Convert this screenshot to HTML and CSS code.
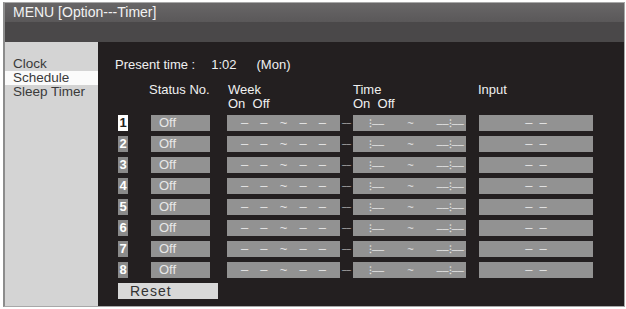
FILE: index.html
```html
<!DOCTYPE html>
<html>
<head>
<meta charset="utf-8">
<link rel="stylesheet" href="styles.css">
</head>
<body>
<div class="frame">
  <div class="titlebar">MENU [Option---Timer]</div>
  <div class="subbar"></div>
  <div class="main">
    <div class="sidebar">
      <div class="item">Clock</div>
      <div class="item active">Schedule</div>
      <div class="item">Sleep Timer</div>
    </div>
    <div class="content">
      <div class="present"><span>Present time :</span><span class="clock">1:02</span><span class="day">(Mon)</span></div>
      <div class="header">
        <div class="h-status">Status No.</div>
        <div class="h-week"><div>Week</div><div>On&nbsp; Off</div></div>
        <div class="h-time"><div>Time</div><div>On&nbsp; Off</div></div>
        <div class="h-input">Input</div>
      </div>
      <div class="rows">
        <div class="row"><div class="num sel">1</div><div class="status">Off</div><div class="week"><span>–</span><span>–</span><span>~</span><span>–</span><span>–</span></div><div class="sep">––</div><div class="time"><span>⁝––</span><span>~</span><span>––⁝––</span></div><div class="input">–&nbsp;&nbsp;–</div></div>
        <div class="row"><div class="num">2</div><div class="status">Off</div><div class="week"><span>–</span><span>–</span><span>~</span><span>–</span><span>–</span></div><div class="sep">––</div><div class="time"><span>⁝––</span><span>~</span><span>––⁝––</span></div><div class="input">–&nbsp;&nbsp;–</div></div>
        <div class="row"><div class="num">3</div><div class="status">Off</div><div class="week"><span>–</span><span>–</span><span>~</span><span>–</span><span>–</span></div><div class="sep">––</div><div class="time"><span>⁝––</span><span>~</span><span>––⁝––</span></div><div class="input">–&nbsp;&nbsp;–</div></div>
        <div class="row"><div class="num">4</div><div class="status">Off</div><div class="week"><span>–</span><span>–</span><span>~</span><span>–</span><span>–</span></div><div class="sep">––</div><div class="time"><span>⁝––</span><span>~</span><span>––⁝––</span></div><div class="input">–&nbsp;&nbsp;–</div></div>
        <div class="row"><div class="num">5</div><div class="status">Off</div><div class="week"><span>–</span><span>–</span><span>~</span><span>–</span><span>–</span></div><div class="sep">––</div><div class="time"><span>⁝––</span><span>~</span><span>––⁝––</span></div><div class="input">–&nbsp;&nbsp;–</div></div>
        <div class="row"><div class="num">6</div><div class="status">Off</div><div class="week"><span>–</span><span>–</span><span>~</span><span>–</span><span>–</span></div><div class="sep">––</div><div class="time"><span>⁝––</span><span>~</span><span>––⁝––</span></div><div class="input">–&nbsp;&nbsp;–</div></div>
        <div class="row"><div class="num">7</div><div class="status">Off</div><div class="week"><span>–</span><span>–</span><span>~</span><span>–</span><span>–</span></div><div class="sep">––</div><div class="time"><span>⁝––</span><span>~</span><span>––⁝––</span></div><div class="input">–&nbsp;&nbsp;–</div></div>
        <div class="row"><div class="num">8</div><div class="status">Off</div><div class="week"><span>–</span><span>–</span><span>~</span><span>–</span><span>–</span></div><div class="sep">––</div><div class="time"><span>⁝––</span><span>~</span><span>––⁝––</span></div><div class="input">–&nbsp;&nbsp;–</div></div>
        <div class="reset">Reset</div>
      </div>
    </div>
  </div>
</div>
</body>
</html>
```
FILE: styles.css
```css
html, body {
  margin: 0;
  padding: 0;
  background: #ffffff;
}
body {
  font-family: "Liberation Sans", Arial, sans-serif;
}
.frame {
  margin: 2px 0 0 3px;
  width: 619px;
  height: 303px;
  border: 1px solid #a8a8a8;
  border-left: 2px solid #8c8c8c;
  display: flex;
  flex-direction: column;
  background: #231f20;
}
.titlebar {
  height: 19px;
  background: linear-gradient(#686667, #5a5859);
  color: #f2f2f2;
  font-size: 14px;
  line-height: 19px;
  padding-left: 8px;
}
.subbar {
  height: 20px;
  background: #4a4849;
}
.main {
  flex: 1;
  display: flex;
}
.sidebar {
  width: 93px;
  background: #d4d4d4;
  padding-top: 15px;
  box-sizing: border-box;
}
.item {
  font-size: 13.5px;
  line-height: 14px;
  color: #3a3a3a;
  padding-left: 8px;
}
.item.active {
  background: #fbfbfb;
}
.content {
  flex: 1;
  padding: 15px 0 0 20px;
  color: #f0f0f0;
}
.present {
  font-size: 13px;
  line-height: 15px;
  margin-left: -3px;
  display: flex;
}
.present .clock { margin-left: 16px; }
.present .day { margin-left: 20px; }
.header {
  display: flex;
  font-size: 13px;
  line-height: 13px;
  margin-top: 11px;
}
.h-week div + div, .h-time div + div { margin-top: 1px; }
.h-status { margin-left: 31px; width: 79px; }
.h-week { width: 125px; }
.h-time { width: 125px; }
.rows {
  margin-top: 5px;
  display: flex;
  flex-direction: column;
  gap: 5px;
}
.row {
  display: flex;
  height: 16px;
  font-size: 13px;
  line-height: 16px;
}
.num {
  width: 10px;
  background: #8a8a8a;
  color: #ffffff;
  font-weight: bold;
  font-size: 13px;
  text-align: center;
}
.num.sel {
  background: #ffffff;
  color: #222;
}
.status {
  margin-left: 23px;
  width: 59px;
  background: #929292;
  color: #e8e8e8;
  padding-left: 8px;
  box-sizing: border-box;
}
.week, .time, .input {
  background: #929292;
  color: #e6e6e6;
}
.week {
  margin-left: 17px;
  width: 113px;
  display: flex;
  justify-content: space-between;
  padding: 0 14px;
  box-sizing: border-box;
}
.sep {
  width: 13px;
  text-align: center;
  color: #e0e0e0;
  font-size: 8px;
}
.time {
  width: 113px;
  display: flex;
  justify-content: space-between;
  padding: 0 2px 0 16px;
  box-sizing: border-box;
  font-size: 11px;
}
.input {
  margin-left: 13px;
  width: 114px;
  text-align: center;
}
.reset {
  width: 100px;
  height: 16px;
  background: #d8d8d8;
  color: #333;
  font-size: 14px;
  line-height: 16px;
  letter-spacing: 1px;
  padding-left: 12px;
  box-sizing: border-box;
}
```
